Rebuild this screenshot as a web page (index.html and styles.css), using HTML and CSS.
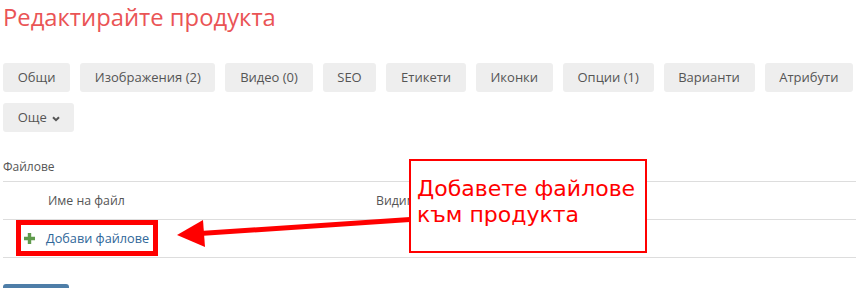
FILE: index.html
```html
<!DOCTYPE html>
<html lang="bg">
<head>
    <meta charset="UTF-8">
    <title>Редактирайте продукта</title>
    <link rel="stylesheet" href="styles.css">
</head>
<body>
    <div class="page">
        <h1 class="title">Редактирайте продукта</h1>

        <!-- Tabs -->
        <div class="tabs">
            <span class="tab">Общи</span>
            <span class="tab">Изображения (2)</span>
            <span class="tab">Видео (0)</span>
            <span class="tab">SEO</span>
            <span class="tab">Етикети</span>
            <span class="tab">Иконки</span>
            <span class="tab">Опции (1)</span>
            <span class="tab">Варианти</span>
            <span class="tab">Атрибути</span>
            <span class="tab">Още <svg class="caret" width="8" height="6" viewBox="0 0 8 6"><path d="M1 1.2 L4 4.2 L7 1.2" fill="none" stroke="#555" stroke-width="2"/></svg></span>
        </div>

        <!-- Files -->
        <div class="files">
            <div class="files-label">Файлове</div>
            <table class="files-table">
                <tr>
                    <th class="col-handle"></th>
                    <th class="col-name">Име на файл</th>
                    <th>Видимост</th>
                </tr>
                <tr class="add-row">
                    <td colspan="3">
                        <a class="add-link" href="#">
                            <svg class="plus" width="11" height="11" viewBox="0 0 11 11"><path d="M3.8 0h3.4v3.8H11v3.4H7.2V11H3.8V7.2H0V3.8h3.8z" fill="#5f9a4c"/></svg>
                            Добави файлове
                        </a>
                    </td>
                </tr>
            </table>
        </div>

        <button class="save">Запази</button>

        <!-- Annotation -->
        <div class="note">Добавете файлове към продукта</div>
        <svg class="arrow" width="856" height="288" viewBox="0 0 856 288">
            <polygon points="200,231 410,217 410,222 200,236" fill="#ff0000"/>
            <polygon points="177,235 203,220 205,247" fill="#ff0000"/>
        </svg>
    </div>
</body>
</html>
```

FILE: styles.css
```css
body {
    margin: 0;
    font-family: 'Open Sans', sans-serif;
    background: white;
    color: #555;
    overflow: hidden;
}

.page {
    position: relative;
    padding: 0 0 0 3px;
    height: 288px;
}

.title {
    margin: 0;
    padding-top: 2px;
    font-size: 23.8px;
    font-weight: 400;
    line-height: 30px;
    color: #ea5455;
}

.tabs {
    display: flex;
    flex-wrap: wrap;
    gap: 11px 10px;
    margin-top: 31px;
}

.tab {
    display: inline-flex;
    align-items: center;
    gap: 5px;
    background: #eee;
    border-radius: 3px;
    padding: 5px 14.7px;
    font-size: 13px;
    line-height: 19px;
    color: #555;
    white-space: nowrap;
}

.caret {
    margin-top: 2px;
}

.files {
    margin-top: 26px;
}

.files-label {
    font-size: 12px;
    line-height: 18px;
    padding-bottom: 5px;
    border-bottom: 1px solid #ddd;
}

.files-table {
    width: 100%;
    table-layout: fixed;
    border-collapse: collapse;
    font-size: 12.3px;
    line-height: 19px;
}

.files-table th {
    text-align: left;
    font-weight: 400;
    padding: 9px 8px;
    border-bottom: 1px solid #ddd;
    box-sizing: border-box;
}

.col-handle {
    width: 37px;
}

.col-name {
    width: 328px;
}

.add-row td {
    padding: 0 0 1px 13px;
    border-bottom: 1px solid #ddd;
}

.add-link {
    display: inline-flex;
    align-items: center;
    gap: 11px;
    box-sizing: border-box;
    height: 36px;
    padding: 0 4px 0 3px;
    border: 5px solid #ff0000;
    font-size: 12.7px;
    color: #2f6799;
    text-decoration: none;
    white-space: nowrap;
}

.save {
    margin-top: 26px;
    width: 66px;
    height: 30px;
    border: none;
    border-radius: 3px;
    background: #4e7ea8;
    color: white;
    font-family: 'Open Sans', sans-serif;
    font-size: 13px;
}

.note {
    position: absolute;
    left: 409px;
    top: 159px;
    width: 238px;
    height: 94px;
    box-sizing: border-box;
    border: 2px solid #ff0000;
    background: white;
    padding: 15px 6px 0 6px;
    font-family: 'DejaVu Sans', sans-serif;
    font-size: 22px;
    line-height: 26px;
    color: #ff0000;
}

.arrow {
    position: absolute;
    left: 0;
    top: 0;
}
```
